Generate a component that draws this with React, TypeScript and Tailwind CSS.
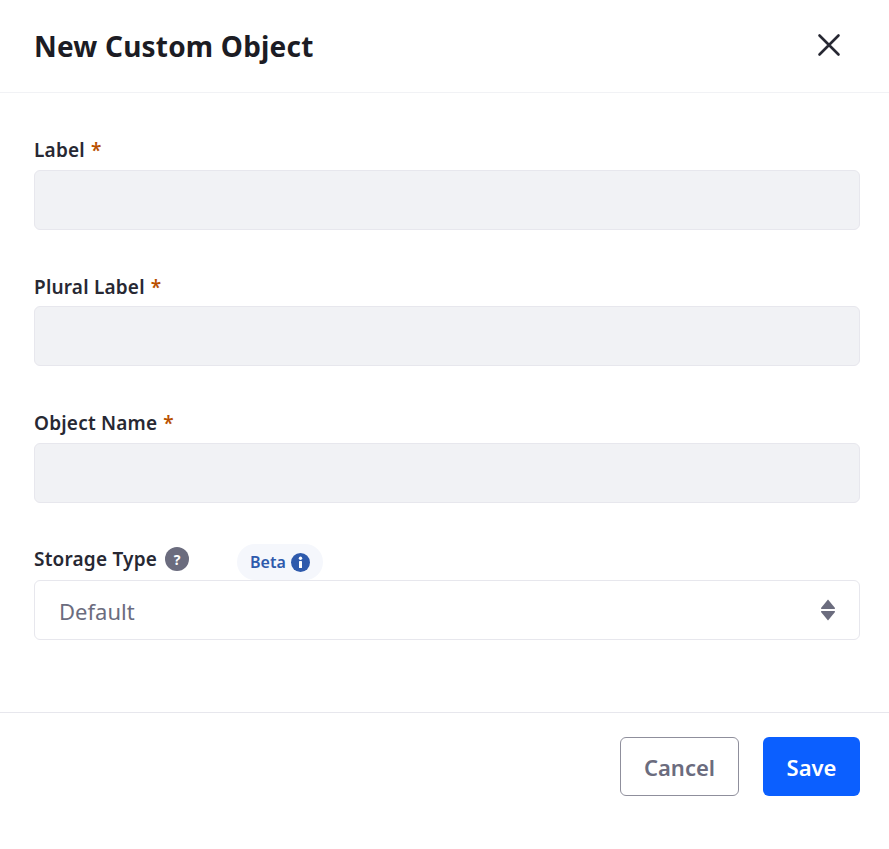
import React from 'react';

const FONT = "font-['Noto_Sans','Open_Sans',sans-serif]";

interface FieldProps {
  label: string;
}

// Required text field, label plus a disabled looking grey input
const Field: React.FC<FieldProps> = ({ label }) => {
  return (
    <div className="flex h-[136.4px] flex-col">
      <label className="flex h-[29px] items-center pt-[2px] text-[19px] font-semibold tracking-[0.2px] text-[#272833]">
        {label}
        <span className="ml-[6px] text-[#b95000]">*</span>
      </label>
      <div className="mt-[6px] h-[60px] rounded-[6px] border border-[#e7e7ed] bg-[#f1f2f5]" />
    </div>
  );
};

const App: React.FC = () => {
  return (
    <div className={`${FONT} flex h-[849px] w-[889px] flex-col bg-white`}>
      <header className="flex h-[93px] items-center justify-between border-b border-[#f1f2f5] pl-[34px] pr-[48px]">
        <h1 className="text-[28px] font-bold tracking-[0.2px] text-[#1c1c24]">New Custom Object</h1>
        <button className="mb-[2px] text-[#272833]" aria-label="Close">
          <svg width="24" height="24" viewBox="0 0 24 24" fill="none" stroke="currentColor" strokeWidth="2.6" strokeLinecap="round">
            <path d="M2.5 2.5 L21.5 21.5 M21.5 2.5 L2.5 21.5" />
          </svg>
        </button>
      </header>

      <main className="flex h-[619px] flex-col pl-[34px] pr-[29px] pt-[42px]">
        <Field label="Label" />
        <Field label="Plural Label" />
        <Field label="Object Name" />
        <div className="flex flex-col">
          <div className="flex h-[36px] items-center">
            <label className="mb-[6px] text-[19px] font-semibold tracking-[0.2px] text-[#272833]">Storage Type</label>
            <span className="mb-[6px] ml-[8px] flex h-[24px] w-[24px] items-center justify-center rounded-full bg-[#6b6c7e] text-[14px] font-bold text-white">?</span>
            <span className="ml-[48px] flex h-[36px] items-center gap-[5px] rounded-full bg-[#f5f7fc] px-[13px] text-[16px] font-semibold text-[#2e5aac]">
              Beta
              <svg width="19" height="19" viewBox="0 0 19 19">
                <circle cx="9.5" cy="9.5" r="9.5" fill="#2e5aac" />
                <rect x="8" y="8" width="3" height="7" rx="0.6" fill="white" />
                <circle cx="9.5" cy="5.3" r="1.7" fill="white" />
              </svg>
            </span>
          </div>
          <div className="flex h-[60px] items-center justify-between rounded-[6px] border border-[#e7e7ed] bg-white pl-[24px] pr-[23px]">
            <span className="mt-[2px] text-[22px] text-[#6b6c7e]">Default</span>
            <svg width="16" height="22" viewBox="0 0 16 22" fill="#6b6c7e">
              <path d="M8 0.5 L15 9 Q15.5 10 14 10 L2 10 Q0.5 10 1 9 Z" />
              <path d="M2 12 L14 12 Q15.5 12 15 13 L8 21.5 L1 13 Q0.5 12 2 12 Z" />
            </svg>
          </div>
        </div>
      </main>

      <footer className="flex items-start justify-end gap-[24px] border-t border-[#e7e7ed] pr-[29px] pt-[24px]">
        <button className="h-[59px] w-[119px] rounded-[6px] border border-[#8f8f9c] bg-white pt-[2px] text-[22px] font-semibold text-[#6b6c7e]">
          Cancel
        </button>
        <button className="h-[59px] w-[97px] rounded-[6px] bg-[#0b5fff] pt-[2px] text-[22px] font-semibold text-white">
          Save
        </button>
      </footer>
    </div>
  );
};

export default App;
